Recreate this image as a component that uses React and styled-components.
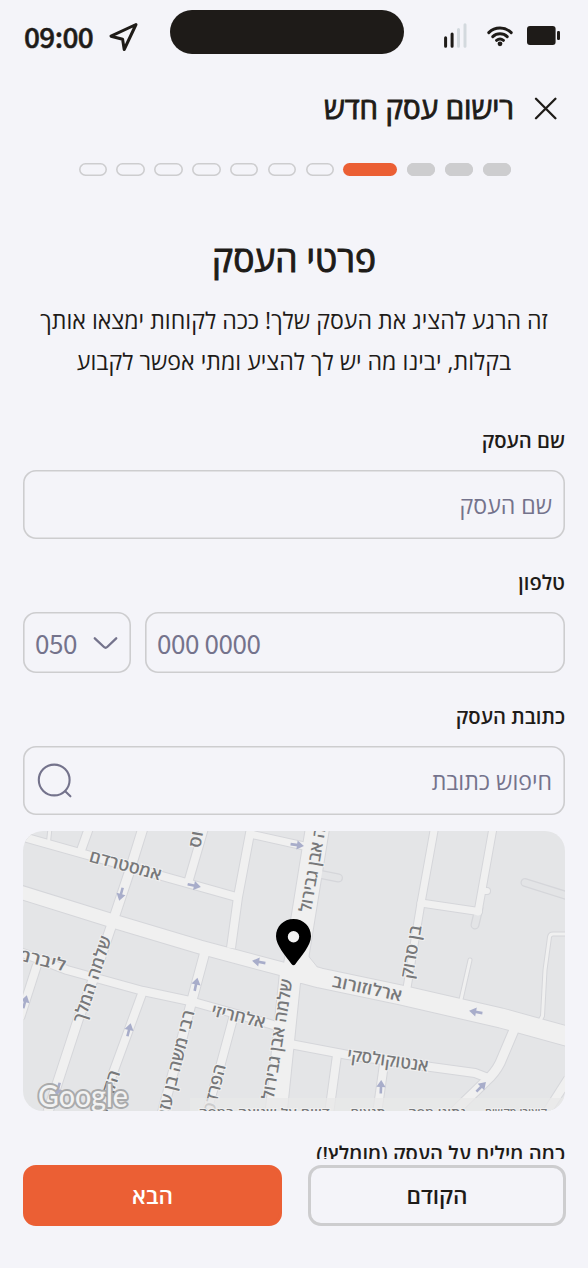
import React from "react";
import styled, { createGlobalStyle, css } from "styled-components";

const Global = createGlobalStyle`
  * { box-sizing: border-box; }
  body { margin: 0; background: #f4f4f9; }
`;

const ink = "#1e1b18";
const muted = "#74738c";
const line = "#cdcdcf";
const hebrew = `"Open Sans", "Noto Sans", sans-serif`;
const digits = `"Noto Sans CJK SC", "Open Sans", sans-serif`;

const Screen = styled.div`
  direction: rtl;
  width: 588px;
  height: 1268px;
  display: flex;
  flex-direction: column;
  overflow: hidden;
  background: #f4f4f9;
  color: ${ink};
  font-family: ${hebrew};
`;

const StatusBar = styled.div`
  direction: ltr;
  flex: none;
  height: 64px;
  padding: 10px 28px 0 24px;
  display: grid;
  grid-template-columns: 146px 234px 1fr;
`;

const Clock = styled.div`
  display: flex;
  align-items: center;
  gap: 15px;
  height: 54px;
  font: 500 28px/52px ${digits};
  letter-spacing: -0.6px;
  -webkit-text-stroke: 0.5px ${ink};
`;

const ClockTime = styled.span`
  padding-bottom: 2px;
`;

const Island = styled.div`
  height: 44px;
  border-radius: 22px;
  background: ${ink};
`;

const Signals = styled.div`
  display: flex;
  justify-content: flex-end;
  height: 50px;
`;

const Header = styled.header`
  flex: none;
  height: 88px;
  padding-right: 31px;
  display: flex;
  align-items: center;
  gap: 20px;
`;

const HeaderTitle = styled.h1`
  margin: 0;
  font-size: 29.4px;
  line-height: 40px;
  font-weight: 400;
  white-space: nowrap;
  -webkit-text-stroke: 0.9px ${ink};
`;

const Steps = styled.div`
  flex: none;
  margin: 11px 77px 0 78.5px;
  display: flex;
  justify-content: space-between;
`;

const Step = styled.span`
  width: 28.5px;
  height: 13px;
  border-radius: 6.5px;
  box-shadow: inset 0 0 0 1.6px ${line};
  ${(p) => p.$state === "done" && css`background: ${line};`}
  ${(p) => p.$state === "current" && css`
    width: 54px;
    background: #eb5f34;
    box-shadow: none;
  `}
`;

const Body = styled.main`
  flex: none;
  height: 983px;
  padding: 58px 23px 0;
  overflow: hidden;
`;

const Title = styled.h2`
  margin: 0;
  text-align: center;
  font-size: 35.4px;
  line-height: 48px;
  font-weight: 400;
  white-space: nowrap;
  -webkit-text-stroke: 1px ${ink};
`;

const Intro = styled.p`
  margin: 18px 0 43px;
  text-align: center;
  font-size: 23.15px;
  line-height: 41px;
  white-space: nowrap;
`;

const IntroLine = styled.span`
  display: block;
`;

const Label = styled.label`
  display: block;
  margin-bottom: 15px;
  font-size: 20.2px;
  line-height: 30px;
  font-weight: 600;
  white-space: nowrap;
`;

const Field = styled.div`
  display: flex;
  align-items: center;
  justify-content: space-between;
  height: ${(p) => p.$h || 69}px;
  padding: 0 13px 0 14px;
  margin-bottom: ${(p) => p.$below ?? 28}px;
  box-shadow: inset 0 0 0 1.6px ${line};
  border-radius: 13px;
  color: ${muted};
  font-size: 23.1px;
  white-space: nowrap;
`;

const PhoneRow = styled.div`
  direction: ltr;
  display: grid;
  grid-template-columns: 108px 1fr;
  gap: 14px;
  font-family: ${digits};
  ${Field} {
    padding: 0 13px 0 12px;
    font-size: 26px;
    line-height: 59px;
    letter-spacing: -0.4px;
  }
`;

const MapCard = styled.div`
  height: 280px;
  margin-bottom: 27px;
  border-radius: 20px;
  overflow: hidden;
  svg { display: block; }
`;

const Footer = styled.footer`
  flex: none;
  padding: 6px 22px 0 23px;
  display: grid;
  grid-template-columns: 258px 259px;
  justify-content: space-between;
`;

const Button = styled.button`
  height: 61px;
  border-radius: 13px;
  padding: 0;
  font: 600 22.6px/40px ${hebrew};
  border: 3px solid ${(p) => (p.$primary ? "#eb5f34" : line)};
  background: ${(p) => (p.$primary ? "#eb5f34" : "transparent")};
  color: ${(p) => (p.$primary ? "#fff" : ink)};
`;

const MapText = styled.text`
  font: 600 ${(p) => p.$size || 17}px ${hebrew};
  fill: #77787a;
  stroke: #f0f0f0;
  stroke-width: 2px;
  paint-order: stroke;
  text-anchor: middle;
  direction: rtl;
`;

const Logo = styled.text`
  font: 500 30px Lato, sans-serif;
  fill: #f2f2f2;
  stroke: #a9aaab;
  stroke-width: 4px;
  stroke-linejoin: round;
  paint-order: stroke;
  direction: ltr;
`;

const LocationIcon = () => (
  <svg width="31" height="32" viewBox="108 22 31 32" fill="none" stroke={ink} strokeWidth="3" strokeLinejoin="round">
    <path d="M136 25.5 111 37.2l11.6 3 1.6 10.3z" />
  </svg>
);

const StatusIcons = () => (
  <svg width="118" height="50" viewBox="442 10 118 50" fill="none" strokeLinecap="round">
    <g strokeWidth="3">
      <path stroke={ink} d="M445.6 37.8v8.5M452.1 34v12.3" />
      <path stroke="#d3d9de" d="M458.5 29.5v16.8M465 24.8v21.5" />
    </g>
    <g stroke={ink} strokeWidth="3">
      <path d="M488.8 32.6c6.2-6 16.2-6 22.4 0M492.8 36.7c4-3.8 10.4-3.8 14.4 0M496.6 40.4c2-1.7 4.8-1.7 6.8 0" />
      <circle cx="500" cy="43.8" r="2.4" fill={ink} stroke="none" />
    </g>
    <rect x="527" y="26" width="28.6" height="19" rx="3" fill={ink} />
    <rect x="557" y="31" width="3" height="9" rx="1.2" fill={ink} />
  </svg>
);

const CloseIcon = () => (
  <svg width="23" height="23" viewBox="0 0 23 23" stroke={ink} strokeWidth="2.3" strokeLinecap="round">
    <path d="M2 1.8 21.4 21.2M21.4 1.8 2 21.2" />
  </svg>
);

const ChevronIcon = () => (
  <svg width="25" height="14" viewBox="0 0 25 14" fill="none" stroke={muted} strokeWidth="2.3" strokeLinecap="round" strokeLinejoin="round">
    <path d="M1.8 2.3 11 11q1.6 1.5 3.2 0L23.2 2.3" />
  </svg>
);

const SearchIcon = () => (
  <svg width="36" height="36" viewBox="0 0 36 36" fill="none" stroke={muted} strokeWidth="2.1" strokeLinecap="round">
    <circle cx="17.2" cy="17" r="15.4" />
    <path d="m28.2 28.3 5.2 5" />
  </svg>
);

const lanes = [
  ["M20 836 240 898", 8],
  ["M50 828 48.5 842", 3],
  ["M89 828 79 856", 8],
  ["M143 828 129 873 113 921 93 980 78 1020 48 1112", 9],
  ["M204 828 188 883", 8],
  ["M251 828 238 897 231 948", 8],
  ["M250 834 304 846", 7],
  ["M20 952 67 970 143 991 190 1001 240 1015 280 1027", 8],
  ["M37 965 20 1018", 8],
  ["M143 991 113 1073 99 1114", 8],
  ["M206 948 192 1000 173 1073 162 1114", 9],
  ["M234 1015 220 1067 206 1114", 8],
  ["M290 1044 348 1055 431 1067 475 1073 488 1078", 8],
  ["M514 1030 500 1063Q495 1073 486 1081L454 1112", 9],
  ["M337 1055 329 1114", 8],
  ["M384 1064 377 1114", 8],
  ["M568 1079 547 1112", 8],
  ["M434.5 828 421 903 406 994", 7],
  ["M493 828 478 912", 7],
  ["M421 903 478.5 911.5", 7],
  ["M484 891 487 891", 6],
  ["M470 960 460 1004", 3],
  ["M568 934 553 934Q550 934 549.5 937L545 970 542.5 1016 537 1026", 3],
];
const stubs = ["M479 908 475 925", "M321 874.5 338.5 878", "M525 882.5 568 896"];
const mains = [
  ["M20 892 113 921 200 947 290 971", 13],
  ["M290 970 320 978 401 995 501 1018 570 1037", 19],
  ["M317.5 828 295 968", 23],
  ["M291 968 276 1114", 21],
];

const streets = [
  ["אמסטרדם", 124, 871, 15, 74],
  ["פינסקרווס", 207, 810, -80, 78],
  ["שלמה אבן גבירול", 321, 855, -80, 118],
  ["שלמה אבן גבירול", 283, 1040, -81, 122],
  ["בן סרוק", 417, 953, -80, 54],
  ["ארלוזורוב", 366, 994, 12, 71],
  ["שלמה המלך", 98, 981, -72, 90],
  ["ליברמן", 38, 965, 14, 54],
  ["אלחריזי", 237, 1022, 13.5, 55],
  ["רבי משה בן עזרא", 180, 1071, -76, 122],
  ["הפרדס", 220, 1090, -76, 50],
  ["הקליר", 113, 1095, -72, 48],
  ["אנטוקולסקי", 387, 1066, 8, 82],
];

const arrows = [
  [194, 885.5, 12], [121, 894, 105], [297, 845, 8], [259, 962, 190], [25, 1002, -75], [196, 984.5, -78],
  [129, 1030, -76], [476, 1012, 190], [381, 1087, -88], [481, 1087, -45], [58, 1089, 105],
];

const credits = [["קיצורי מקשים", 516, 62], ["נתוני מפה", 437, 58], ["תנאים", 368, 35], ["דיווח על שגיאה במפה", 264, 131]];

const StreetMap = () => (
  <svg width="542" height="280" viewBox="23 831 542 280">
    <rect x="23" y="831" width="542" height="280" fill="#e4e5e7" />
    <g fill="none" strokeLinejoin="round">
      <g stroke="#d5d6da">
        {stubs.map((d) => <path key={d} d={d} strokeWidth="9" strokeLinecap="round" />)}
        {[...lanes, ...mains].map(([d, w]) => <path key={d} d={d} strokeWidth={w + 2} strokeLinecap={w < 8 ? "round" : "butt"} />)}
      </g>
      <path d="M306 953 323 974H300z" fill="#f0f0f0" stroke="#d5d6da" />
      {stubs.map((d) => <path key={d} d={d} stroke="#e3e4e6" strokeWidth="6.5" strokeLinecap="round" />)}
      <g stroke="#f0f0f0">
        {[...lanes, ...mains].map(([d, w]) => <path key={d} d={d} strokeWidth={w} strokeLinecap={w < 8 ? "round" : "butt"} />)}
      </g>
      <path d="M300 952 320 973 310 983H290z" fill="#f0f0f0" />
    </g>
    {arrows.map(([x, y, a]) => (
      <g key={`${x}-${y}`} transform={`translate(${x} ${y}) rotate(${a})`}>
        <path d="M-6.5 0H1" stroke="#a8adca" strokeWidth="2.6" />
        <path d="M0-4.6 7 0 0 4.6z" fill="#a8adca" />
      </g>
    ))}
    {streets.map(([t, x, y, a, len]) => (
      <MapText key={`${t}-${x}`} textLength={len} lengthAdjust="spacingAndGlyphs" transform={`translate(${x} ${y}) rotate(${a})`}>{t}</MapText>
    ))}
    <rect x="190" y="1098" width="375" height="13" fill="#e8e8e8" opacity="0.75" />
    {credits.map(([t, x, len]) => (
      <MapText key={t} $size={12} x={x} y="1117" textLength={len} lengthAdjust="spacingAndGlyphs">{t}</MapText>
    ))}
    <Logo x="38" y="1107" textLength="90" lengthAdjust="spacingAndGlyphs">Google</Logo>
    <path d="M293.5 919c-10 0-17.5 7.7-17.5 17.3 0 9 9.5 19.7 15.5 27.6q2 2.6 4 0c6-7.9 15.5-18.6 15.5-27.6 0-9.6-7.500-17.3-17.5-17.3z" fill="#000" />
    <circle cx="293.5" cy="936.8" r="5.7" fill="#f4f4f4" />
  </svg>
);

const steps = ["done", "done", "done", "current", "", "", "", "", "", "", ""];

export default function App() {
  return (
    <>
      <Global />
      <Screen>
        <StatusBar>
          <Clock><ClockTime>09:00</ClockTime><LocationIcon /></Clock>
          <Island />
          <Signals><StatusIcons /></Signals>
        </StatusBar>
        <Header>
          <CloseIcon />
          <HeaderTitle>רישום עסק חדש</HeaderTitle>
        </Header>
        <Steps>{steps.map((s, i) => <Step key={i} $state={s} />)}</Steps>
        <Body>
          <Title>פרטי העסק</Title>
          <Intro>
            <IntroLine>זה הרגע להציג את העסק שלך! ככה לקוחות ימצאו אותך</IntroLine>
            <IntroLine>בקלות, יבינו מה יש לך להציע ומתי אפשר לקבוע</IntroLine>
          </Intro>
          <Label>שם העסק</Label>
          <Field>שם העסק</Field>
          <Label>טלפון</Label>
          <PhoneRow>
            <Field $h={61}>050 <ChevronIcon /></Field>
            <Field $h={61}>000 0000</Field>
          </PhoneRow>
          <Label>כתובת העסק</Label>
          <Field $below={16}>חיפוש כתובת<SearchIcon /></Field>
          <MapCard><StreetMap /></MapCard>
          <Label>כמה מילים על העסק (מומלץ!)</Label>
        </Body>
        <Footer>
          <Button>הקודם</Button>
          <Button $primary>הבא</Button>
        </Footer>
      </Screen>
    </>
  );
}
